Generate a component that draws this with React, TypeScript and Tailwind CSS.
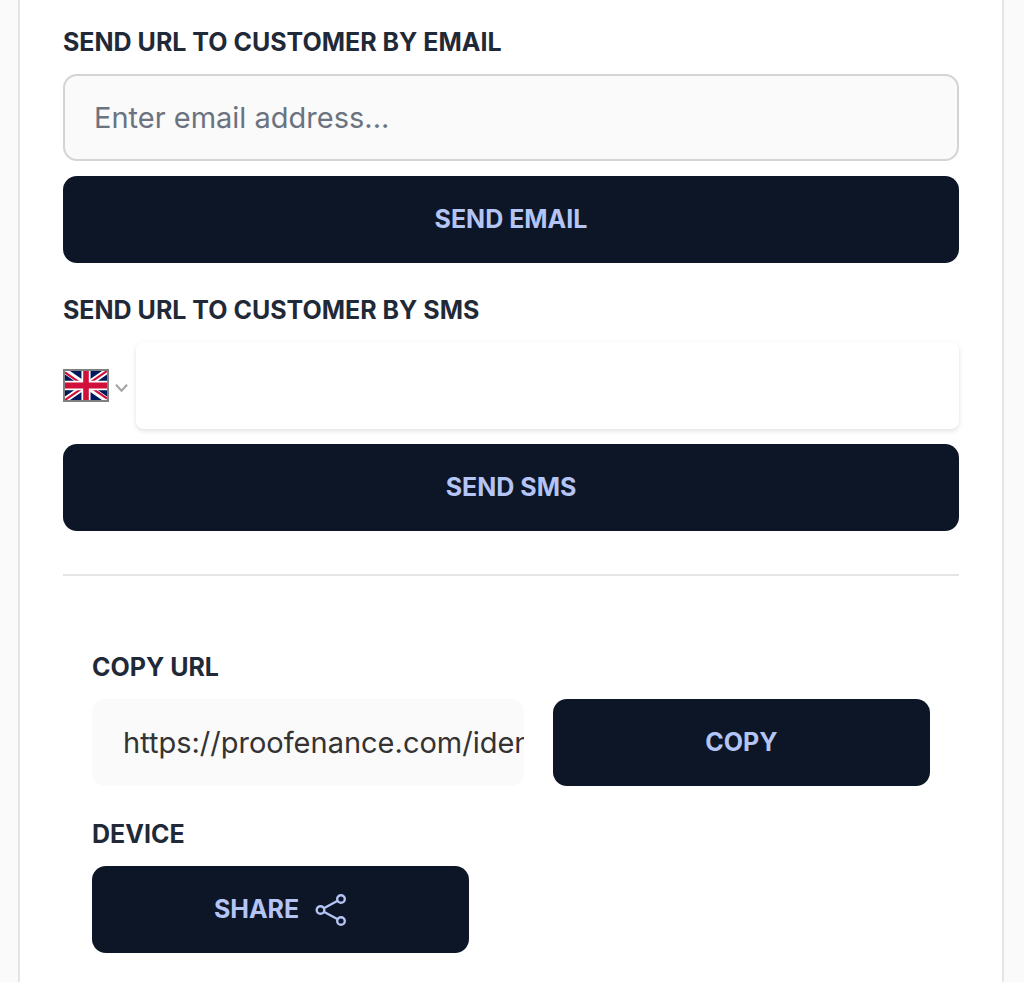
import { ReactNode, useState } from "react";

const url = "https://proofenance.com/identity/verify";

type ActionButtonProps = {
  children: ReactNode;
  className: string;
  onClick?: () => void;
};

const ActionButton = ({ children, className, onClick }: ActionButtonProps) => {
  return (
    <button
      type="button"
      onClick={onClick}
      className={`flex h-[87px] items-center justify-center gap-4 rounded-[14px] bg-[#0d1627] text-[25px] font-bold uppercase text-[#b4c4f4] ${className}`}
    >
      {children}
    </button>
  );
};

const labelClass = "mb-[14px] block text-[25px] leading-[36px] font-bold uppercase text-[#1f2937]";

const FlagIcon = () => {
  return (
    <svg viewBox="0 0 60 40" preserveAspectRatio="none" className="h-full w-full" aria-hidden="true">
      <path fill="#00195c" d="M0 0h60v40H0z" />
      <path stroke="#fff" strokeWidth="8" d="M0 0l60 40M60 0L0 40" />
      <path stroke="#d0103a" strokeWidth="3" d="M0 2l30 20M60 0L30 20M60 38L30 18M0 40l30-20" />
      <path stroke="#fff" strokeWidth="13" d="M30 0v40M0 20h60" />
      <path stroke="#d0103a" strokeWidth="8" d="M30 0v40M0 20h60" />
    </svg>
  );
};

const ShareIcon = () => {
  return (
    <svg viewBox="0 0 32 34" className="h-[34px] w-[32px]" fill="none" stroke="currentColor" strokeWidth="2.4" aria-hidden="true">
      <circle cx="5.5" cy="17" r="3.8" />
      <circle cx="26" cy="6" r="3.8" />
      <circle cx="26" cy="28" r="3.8" />
      <path d="M8.8 15.2L22.7 7.8M8.8 18.8l13.9 7.4" />
    </svg>
  );
};

const App = () => {
  const [email, setEmail] = useState("");
  const [phone, setPhone] = useState("");
  const [country, setCountry] = useState("GB");

  return (
    <div className="min-h-screen bg-[#fafafa] pr-5 pl-[18px] font-['Inter',sans-serif]">
      <main className="min-h-screen border-x-2 border-[#e5e5e5] bg-white px-[43px] pt-6 pb-[29px]">
        {/* email */}
        <section className="mb-[29px]">
          <label htmlFor="email" className={labelClass}>Send URL to customer by email</label>
          <input
            id="email"
            type="email"
            value={email}
            onChange={(e) => setEmail(e.target.value)}
            placeholder="Enter email address..."
            className="mb-[15px] h-[87px] w-full rounded-[14px] border-2 border-[#d4d4d4] bg-[#fafafa] px-[29px] text-[29px] text-gray-800 placeholder:text-[#6b7280]"
          />
          <ActionButton className="w-full">Send email</ActionButton>
        </section>

        {/* sms */}
        <section>
          <label htmlFor="phone" className={labelClass}>Send URL to customer by SMS</label>
          <div className="mb-[15px] flex items-center">
            <div className="relative mr-2 flex items-center gap-[6px]">
              <div className="h-[33px] w-[46px] border-2 border-[#808080]">
                <FlagIcon />
              </div>
              <svg viewBox="0 0 14 10" className="mt-1 h-[10px] w-[13px]" fill="none" stroke="#a3a3a3" strokeWidth="2.2" aria-hidden="true">
                <path d="M1 1.5l6 6.5 6-6.5" />
              </svg>
              <select
                aria-label="Country"
                value={country}
                onChange={(e) => setCountry(e.target.value)}
                className="absolute inset-0 w-full cursor-pointer opacity-0"
              >
                <option value="GB">GB</option>
              </select>
            </div>
            <input
              id="phone"
              type="tel"
              value={phone}
              onChange={(e) => setPhone(e.target.value)}
              className="h-[87px] min-w-0 flex-1 rounded-[8px] bg-white px-[29px] text-[29px] text-gray-800 shadow-[0_2px_5px_rgba(0,0,0,0.12)]"
            />
          </div>
          <ActionButton className="w-full">Send SMS</ActionButton>
        </section>

        <hr className="mt-[43px] mb-[44px] border-t-2 border-[#e5e5e5]" />

        {/* copy and share */}
        <section className="px-[29px] pt-[29px]">
          <label htmlFor="url" className={labelClass}>Copy URL</label>
          <div className="mb-[30px] flex gap-[29px]">
            <input
              id="url"
              readOnly
              value={url}
              className="h-[87px] min-w-0 flex-1 rounded-[14px] bg-[#fafafa] pl-[31px] text-[29px] text-[#333333]"
            />
            <ActionButton className="w-[45%]" onClick={() => navigator.clipboard.writeText(url)}>
              Copy
            </ActionButton>
          </div>
          <h2 className={labelClass}>Device</h2>
          <ActionButton className="w-[45%]">
            Share
            <ShareIcon />
          </ActionButton>
        </section>
      </main>
    </div>
  );
};

export default App;
